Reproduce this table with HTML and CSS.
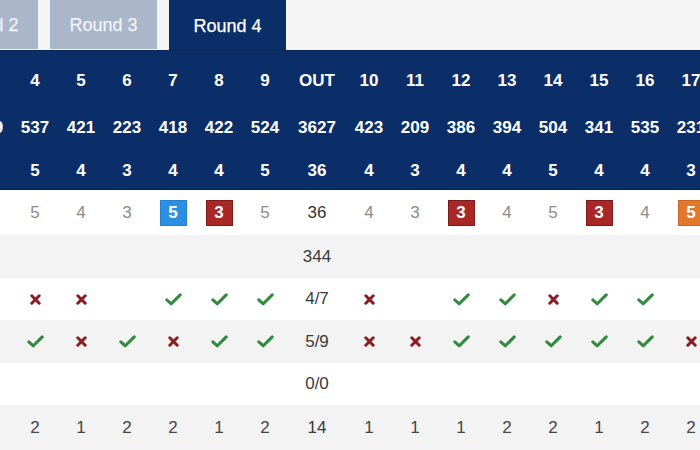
FILE: index.html
```html
<!DOCTYPE html>
<html>
<head>
<meta charset="utf-8">
<link rel="stylesheet" href="styles.css">
</head>
<body>
<svg class="defs" width="0" height="0">
  <symbol id="chk" viewBox="0 0 17 13"><path d="M1.8 6.8 L6.3 10.8 L15.2 1.9" fill="none" stroke="#2f8a3b" stroke-width="3" stroke-linecap="round" stroke-linejoin="round"/></symbol>
  <symbol id="crs" viewBox="0 0 11 11"><path d="M1.8 1.8 L9.2 9.2 M9.2 1.8 L1.8 9.2" fill="none" stroke="#8c1c22" stroke-width="3" stroke-linecap="round"/></symbol>
</svg>
<div class="page">
  <div class="tabs">
    <div class="tab">Round 2</div>
    <div class="tab">Round 3</div>
    <div class="tab active">Round 4</div>
  </div>
  <div class="card">
    <div class="row head r-hole">
      <div>3</div><div>4</div><div>5</div><div>6</div><div>7</div><div>8</div><div>9</div><div>OUT</div>
      <div>10</div><div>11</div><div>12</div><div>13</div><div>14</div><div>15</div><div>16</div><div>17</div>
    </div>
    <div class="row head r-yard">
      <div>449</div><div>537</div><div>421</div><div>223</div><div>418</div><div>422</div><div>524</div><div>3627</div>
      <div>423</div><div>209</div><div>386</div><div>394</div><div>504</div><div>341</div><div>535</div><div>231</div>
    </div>
    <div class="row head r-par">
      <div>4</div><div>5</div><div>4</div><div>3</div><div>4</div><div>4</div><div>5</div><div>36</div>
      <div>4</div><div>3</div><div>4</div><div>4</div><div>5</div><div>4</div><div>4</div><div>3</div>
    </div>
    <div class="row body r-score">
      <div>4</div><div>5</div><div>4</div><div>3</div><div><span class="badge blue">5</span></div><div><span class="badge red">3</span></div><div>5</div><div class="tot">36</div>
      <div>4</div><div>3</div><div><span class="badge red">3</span></div><div>4</div><div>5</div><div><span class="badge red">3</span></div><div>4</div><div><span class="badge orange">5</span></div>
    </div>
    <div class="row body grey r-43">
      <div></div><div></div><div></div><div></div><div></div><div></div><div></div><div class="tot">344</div>
      <div></div><div></div><div></div><div></div><div></div><div></div><div></div><div></div>
    </div>
    <div class="row body r-42">
      <div></div>
      <div><svg class="x"><use href="#crs"/></svg></div>
      <div><svg class="x"><use href="#crs"/></svg></div>
      <div></div>
      <div><svg class="c"><use href="#chk"/></svg></div>
      <div><svg class="c"><use href="#chk"/></svg></div>
      <div><svg class="c"><use href="#chk"/></svg></div>
      <div class="tot">4/7</div>
      <div><svg class="x"><use href="#crs"/></svg></div>
      <div></div>
      <div><svg class="c"><use href="#chk"/></svg></div>
      <div><svg class="c"><use href="#chk"/></svg></div>
      <div><svg class="x"><use href="#crs"/></svg></div>
      <div><svg class="c"><use href="#chk"/></svg></div>
      <div><svg class="c"><use href="#chk"/></svg></div>
      <div></div>
    </div>
    <div class="row body grey r-43">
      <div><svg class="c"><use href="#chk"/></svg></div>
      <div><svg class="c"><use href="#chk"/></svg></div>
      <div><svg class="x"><use href="#crs"/></svg></div>
      <div><svg class="c"><use href="#chk"/></svg></div>
      <div><svg class="x"><use href="#crs"/></svg></div>
      <div><svg class="c"><use href="#chk"/></svg></div>
      <div><svg class="c"><use href="#chk"/></svg></div>
      <div class="tot">5/9</div>
      <div><svg class="x"><use href="#crs"/></svg></div>
      <div><svg class="x"><use href="#crs"/></svg></div>
      <div><svg class="c"><use href="#chk"/></svg></div>
      <div><svg class="c"><use href="#chk"/></svg></div>
      <div><svg class="c"><use href="#chk"/></svg></div>
      <div><svg class="c"><use href="#chk"/></svg></div>
      <div><svg class="c"><use href="#chk"/></svg></div>
      <div><svg class="x"><use href="#crs"/></svg></div>
    </div>
    <div class="row body r-42">
      <div></div><div></div><div></div><div></div><div></div><div></div><div></div><div class="tot">0/0</div>
      <div></div><div></div><div></div><div></div><div></div><div></div><div></div><div></div>
    </div>
    <div class="row body grey r-45">
      <div>2</div><div>2</div><div>1</div><div>2</div><div>2</div><div>1</div><div>2</div><div class="tot">14</div>
      <div>1</div><div>1</div><div>1</div><div>2</div><div>2</div><div>1</div><div>2</div><div>2</div>
    </div>
  </div>
</div>
</body>
</html>
```
FILE: styles.css
```css
html, body {
  margin: 0;
  padding: 0;
}
body {
  background: #f4f4f4;
  font-family: "Liberation Sans", Arial, Helvetica, sans-serif;
  width: 700px;
  height: 450px;
  overflow: hidden;
}
.defs {
  position: absolute;
}
.page {
  width: 700px;
  overflow: hidden;
}
.tabs {
  display: flex;
  gap: 12px;
  height: 50px;
  margin-left: -69px;
  background: #f5f5f5;
}
.tab {
  width: 107px;
  height: 49px;
  background: #aab6c9;
  color: #f1f3f7;
  font-size: 18px;
  display: flex;
  align-items: center;
  justify-content: center;
  padding-top: 2px;
  box-sizing: border-box;
  -webkit-text-stroke: 0.25px currentColor;
}
.tab.active {
  width: 117px;
  height: 50px;
  background: #0c2e68;
  color: #ffffff;
}
.card {
  margin-left: -34px;
  width: 748px;
}
.row {
  display: grid;
  grid-template-columns: repeat(7, 46px) 58px repeat(8, 46px);
  align-items: center;
  justify-items: center;
  box-sizing: border-box;
}
.row > div {
  display: flex;
  align-items: center;
  justify-content: center;
}
.head {
  background: #0c2e68;
  color: #ffffff;
  font-weight: bold;
  font-size: 17px;
}
.r-hole {
  height: 55px;
  padding-top: 6px;
  border-top: 1px solid #0a2656;
}
.r-yard {
  height: 45px;
}
.r-par {
  height: 40px;
  padding-top: 3px;
  border-bottom: 1px solid #0a2450;
}
.body {
  background: #ffffff;
  color: #444444;
  font-size: 17px;
}
.body.grey {
  background: #f3f3f3;
}
.r-score {
  height: 45px;
  color: #8c8c8c;
}
.r-43 { height: 43px; }
.r-42 { height: 42px; }
.r-45 { height: 45px; }
.tot {
  color: #3a3a3a;
}
.r-score .tot {
  color: #333333;
}
.badge {
  display: flex;
  align-items: center;
  justify-content: center;
  width: 27px;
  height: 26px;
  box-sizing: border-box;
  color: #ffffff;
  font-size: 17px;
  font-weight: bold;
}
.badge.blue {
  background: #2b8fe2;
  border: 1px solid #2581cf;
}
.badge.red {
  background: #a82828;
  border: 1px solid #7d1a1a;
}
.badge.orange {
  background: #e2782b;
  border: 1px solid #c8661f;
}
svg.c {
  width: 17px;
  height: 13px;
}
svg.x {
  width: 11px;
  height: 11px;
}
```
